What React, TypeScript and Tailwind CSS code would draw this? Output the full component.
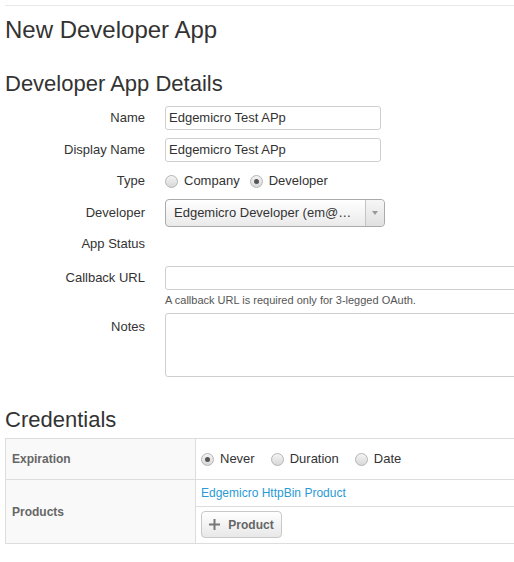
import React from "react";

function Radio({ checked }: { checked?: boolean }) {
  return (
    <span className="relative inline-flex h-[13px] w-[13px] shrink-0 items-center justify-center rounded-full border border-[#b5b5b5] bg-gradient-to-b from-[#f4f4f4] to-[#d8d8d8]">
      {checked && <span className="h-[5px] w-[5px] rounded-full bg-[#555]" />}
    </span>
  );
}

function RadioItem({ label, checked }: { label: string; checked?: boolean }) {
  return (
    <span className="inline-flex items-center gap-[6px]">
      <Radio checked={checked} />
      <span>{label}</span>
    </span>
  );
}

function Label({ children, className = "" }: { children: React.ReactNode; className?: string }) {
  return (
    <div className={"w-[140px] shrink-0 pr-0 text-right text-[13px] text-[#333] " + className}>{children}</div>
  );
}

export default function App() {
  return (
    <div
      className="h-[562px] w-[514px] overflow-hidden bg-white text-[#333]"
      style={{ fontFamily: '"Liberation Sans", Arial, sans-serif' }}
    >
      <div className="ml-[5px] mt-[5px] w-[700px] border-t border-[#e8e8e8]">
        <h1 className="mt-[11px] text-[24px] font-normal leading-[26px] text-[#333]">New Developer App</h1>
        <h2 className="mt-[29px] text-[22px] font-normal leading-[24px] text-[#333]">Developer App Details</h2>

        <div className="mt-[10px] flex flex-col">
          <div className="flex h-[24px] items-center">
            <Label>Name</Label>
            <div className="ml-[20px] flex h-[24px] w-[216px] items-center rounded-[3px] border border-[#cfcfcf] px-[3px] text-[13px] text-[#333]">
              Edgemicro Test APp
            </div>
          </div>
          <div className="mt-[8px] flex h-[24px] items-center">
            <Label>Display Name</Label>
            <div className="ml-[20px] flex h-[24px] w-[216px] items-center rounded-[3px] border border-[#cfcfcf] px-[3px] text-[13px] text-[#333]">
              Edgemicro Test APp
            </div>
          </div>
          <div className="mt-[8px] flex h-[22px] items-center">
            <Label>Type</Label>
            <div className="ml-[20px] flex items-center gap-[10px] text-[13px] text-[#333]">
              <RadioItem label="Company" />
              <RadioItem label="Developer" checked />
            </div>
          </div>
          <div className="mt-[7px] flex h-[28px] items-center">
            <Label>Developer</Label>
            <div className="ml-[20px] flex h-[28px] w-[220px] items-stretch rounded-[4px] border border-[#aaa] bg-gradient-to-b from-white to-[#eaeaea] text-[13px] text-[#333]">
              <div className="flex flex-1 items-center pl-[8px]">Edgemicro Developer (em@…</div>
              <div className="flex w-[19px] items-center justify-center rounded-r-[4px] border-l border-[#c4c4c4] bg-gradient-to-b from-[#f6f6f6] to-[#e0e0e0]">
                <svg width="6" height="4" viewBox="0 0 6 4">
                  <path d="M0 0 L6 0 L3 4 Z" fill="#999" />
                </svg>
              </div>
            </div>
          </div>
          <div className="mt-[7px] flex h-[20px] items-center">
            <Label>App Status</Label>
          </div>
          <div className="mt-[12px] flex h-[24px] items-center">
            <Label>Callback URL</Label>
            <div className="ml-[20px] h-[24px] w-[500px] rounded-[3px] border border-[#cfcfcf]" />
          </div>
          <div className="mt-[3px] flex">
            <div className="w-[160px] shrink-0" />
            <div className="text-[11px] leading-[14px] text-[#555]">A callback URL is required only for 3-legged OAuth.</div>
          </div>
          <div className="mt-[6px] flex items-start">
            <Label className="pt-[4px] leading-[20px]">Notes</Label>
            <div className="ml-[20px] h-[64px] w-[500px] rounded-[3px] border border-[#cfcfcf]" />
          </div>
        </div>

        <h2 className="mt-[31px] text-[22px] font-normal leading-[24px] text-[#333]">Credentials</h2>

        <div className="mt-[6px] w-[700px] border border-[#dddddd]">
          <div className="flex h-[41px] border-b border-[#dddddd]">
            <div className="flex w-[190px] items-center border-r border-[#dddddd] bg-[#f9f9f9] px-[6px] text-[12px] font-bold text-[#666]">
              Expiration
            </div>
            <div className="flex flex-1 items-center gap-[16px] pl-[5px] text-[13px] text-[#333]">
              <RadioItem label="Never" checked />
              <RadioItem label="Duration" />
              <RadioItem label="Date" />
            </div>
          </div>
          <div className="flex h-[63px]">
            <div className="flex w-[190px] items-center border-r border-[#dddddd] bg-[#f9f9f9] px-[6px] text-[12px] font-bold text-[#666]">
              Products
            </div>
            <div className="flex flex-1 flex-col">
              <div className="flex h-[27px] items-center border-b border-[#dddddd] pl-[5px] text-[12px] text-[#2a9ad6]">
                Edgemicro HttpBin Product
              </div>
              <div className="pl-[5px] pt-[4px]">
                <button className="flex h-[27px] w-[81px] items-center justify-center gap-[8px] rounded-[4px] border border-[#c8c8c8] bg-gradient-to-b from-white to-[#e8e8e8] text-[12px] font-bold text-[#666]">
                  <svg width="11" height="11" viewBox="0 0 11 11">
                    <path d="M5.5 0 V11 M0 5.5 H11" stroke="#777" strokeWidth="2" />
                  </svg>
                  <span>Product</span>
                </button>
              </div>
            </div>
          </div>
        </div>
      </div>
    </div>
  );
}
